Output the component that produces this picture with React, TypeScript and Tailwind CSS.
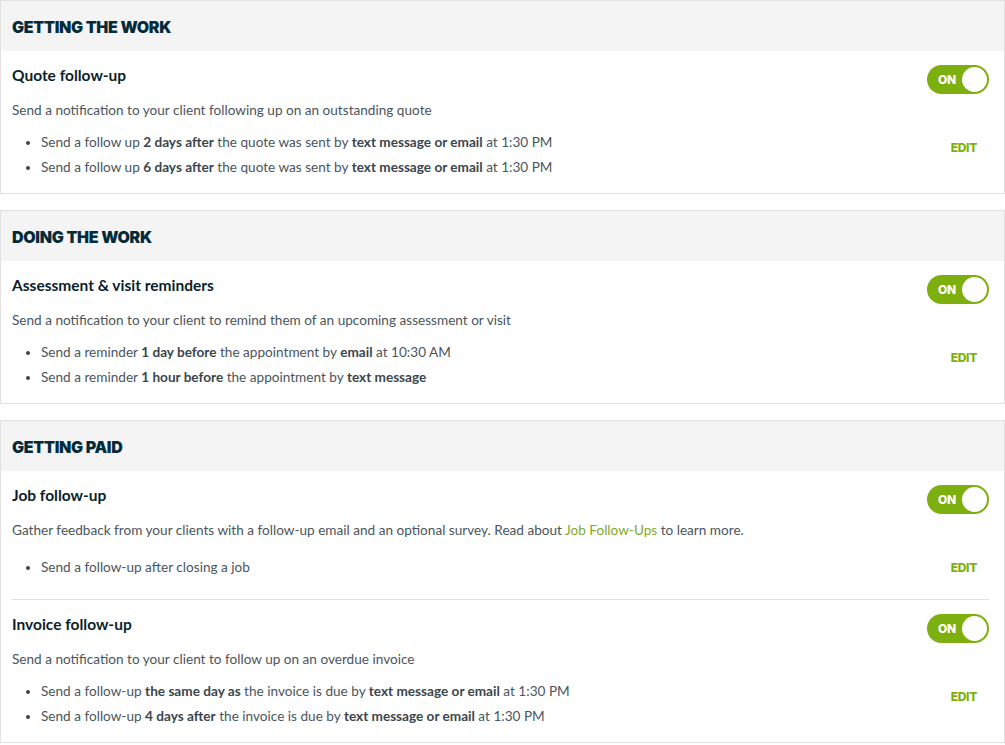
import React from "react";

type Line = React.ReactNode;

type Item = {
    title: string;
    description: React.ReactNode;
    bullets: Line[];
    listGap?: string;
};

type Section = {
    heading: string;
    items: Item[];
};

const B = ({ children }: { children: React.ReactNode }) => (
    <strong className="font-bold text-[#3b464d]">{children}</strong>
);

const sections: Section[] = [
    {
        heading: "GETTING THE WORK",
        items: [
            {
                title: "Quote follow-up",
                description: "Send a notification to your client following up on an outstanding quote",
                bullets: [
                    <>Send a follow up <B>2 days after</B> the quote was sent by <B>text message or email</B> at 1:30 PM</>,
                    <>Send a follow up <B>6 days after</B> the quote was sent by <B>text message or email</B> at 1:30 PM</>,
                ],
            },
        ],
    },
    {
        heading: "DOING THE WORK",
        items: [
            {
                title: "Assessment & visit reminders",
                description: "Send a notification to your client to remind them of an upcoming assessment or visit",
                bullets: [
                    <>Send a reminder <B>1 day before</B> the appointment by <B>email</B> at 10:30 AM</>,
                    <>Send a reminder <B>1 hour before</B> the appointment by <B>text message</B></>,
                ],
            },
        ],
    },
    {
        heading: "GETTING PAID",
        items: [
            {
                title: "Job follow-up",
                description: (
                    <>
                        Gather feedback from your clients with a follow-up email and an optional survey. Read about{" "}
                        <a className="text-[#7fa82a]">Job Follow-Ups</a> to learn more.
                    </>
                ),
                bullets: [<>Send a follow-up after closing a job</>],
                listGap: "mt-[17px]",
            },
            {
                title: "Invoice follow-up",
                description: "Send a notification to your client to follow up on an overdue invoice",
                bullets: [
                    <>Send a follow-up <B>the same day as</B> the invoice is due by <B>text message or email</B> at 1:30 PM</>,
                    <>Send a follow-up <B>4 days after</B> the invoice is due by <B>text message or email</B> at 1:30 PM</>,
                ],
            },
        ],
    },
];

const heavy = { fontFamily: "Inter, 'Noto Sans', sans-serif" };

function Toggle() {
    return (
        <div className="flex items-center justify-between w-[62px] h-[29px] rounded-full bg-[#7db00e] pl-[11px] pr-[2px]">
            <span className="text-white text-[12px] font-extrabold tracking-tight" style={heavy}>ON</span>
            <span className="w-[25px] h-[25px] rounded-full bg-white" />
        </div>
    );
}

function Row({ item, divider }: { item: Item; divider: boolean }) {
    return (
        <div className={divider ? "ml-[11px] mr-[15px] border-t border-[#e1e1e1]" : ""}>
            <div className={`flex ${divider ? "" : "pl-[11px] pr-[15px]"}`}>
                <div className="flex-1 pt-[14px] pb-[16px]">
                    <h3 className="text-[15.5px] font-bold leading-5 text-[#0b1f2b]">{item.title}</h3>
                    <p className="mt-[15px] text-[13.6px] leading-5 text-[#4b555c]">{item.description}</p>
                    <ul className={`${item.listGap ?? "mt-3"} pl-[29px] list-disc space-y-[5px] text-[13.6px] leading-5 text-[#4b555c] marker:text-[#3b464d]`}>
                        {item.bullets.map((b, i) => (
                            <li key={i}>{b}</li>
                        ))}
                    </ul>
                </div>
                <div className="flex flex-col items-end pt-[14px] pb-[23px]">
                    <Toggle />
                    <button className="mt-[46px] mr-[12px] text-[12px] leading-4 font-extrabold text-[#7db00e] tracking-tight" style={heavy}>
                        EDIT
                    </button>
                </div>
            </div>
        </div>
    );
}

export default function App() {
    return (
        <div className="w-[1005px] flex flex-col gap-4 bg-white" style={{ fontFamily: "Lato, 'Noto Sans', sans-serif" }}>
            {sections.map(s => (
                <section key={s.heading} className="border border-[#e1e1e1] bg-white">
                    <div className="h-[50px] bg-[#f4f4f4] px-[11px] pt-[2px] flex items-center">
                        <h2 className="text-[16px] font-black tracking-[-0.3px] text-[#032b3a]" style={heavy}>
                            {s.heading}
                        </h2>
                    </div>
                    {s.items.map((it, i) => (
                        <Row key={it.title} item={it} divider={i > 0} />
                    ))}
                </section>
            ))}
        </div>
    );
}
